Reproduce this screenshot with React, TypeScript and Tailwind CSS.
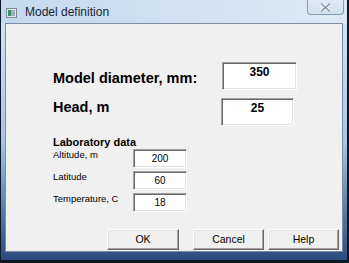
const font = { fontFamily: '"Liberation Sans", Arial, sans-serif' };

function Sunken({ value, className }: { value: string; className: string }) {
  return (
    <div
      className={`bg-white border border-t-[#a0a0a0] border-l-[#a0a0a0] border-r-white border-b-white shadow-[inset_1px_1px_0_#696969,inset_-1px_-1px_0_#e3e3e3] text-center text-black ${className}`}
    >
      {value}
    </div>
  );
}

function Btn({ label, className }: { label: string; className: string }) {
  return (
    <button
      className={`h-[21px] bg-[#f0f0f0] border border-t-white border-l-white border-r-[#696969] border-b-[#696969] shadow-[inset_-1px_-1px_0_#a0a0a0,inset_1px_1px_0_#e3e3e3] text-[10.5px] leading-none text-black ${className}`}
    >
      {label}
    </button>
  );
}

function LabRow({ label, value, className }: { label: string; value: string; className?: string }) {
  return (
    <div className={`flex items-start ${className ?? ""}`}>
      <span className="w-[80px] text-[9.5px] leading-[11px] text-black">{label}</span>
      <Sunken
        value={value}
        className="w-[54px] h-[19px] flex items-center justify-center text-[10px] leading-[12px]"
      />
    </div>
  );
}

export default function App() {
  return (
    <div className="w-[349px] h-[263px] bg-[#0e1726] pl-px pr-[2px] pb-[3px]" style={font}>
      <div className="w-full h-full flex flex-col bg-linear-to-b from-[#cfe2f4] from-10% via-[#a8c3e2] via-55% to-[#2c4a7c] to-100%">
        {/* title bar */}
        <div className="h-[23px] flex items-start bg-linear-to-r from-[#c3d9ee] to-[#dceaf7]">
          <svg width="11" height="10" viewBox="0 0 11 10" className="ml-[5px] mt-[8px]">
            <rect x="0.5" y="0.5" width="10" height="9" fill="#e4ebf1" stroke="#7d8894" />
            <rect x="2" y="2" width="3" height="6" fill="#3f8f6c" />
            <rect x="5" y="2" width="4" height="6" fill="#9fb0bf" />
          </svg>
          <span className="ml-[8px] mt-[5px] text-[12px] leading-[14px] text-[#1c2533]">
            Model definition
          </span>
          <div className="ml-auto mr-[3px] w-[37px] h-[15px] rounded-b-[4px] border border-t-0 border-[#8b9db3] bg-linear-to-b from-[#dfeaf6] to-[#cfdfef] flex items-center justify-center">
            <svg width="11" height="9" viewBox="0 0 11 9">
              <path d="M1.5 1 L9.5 8 M9.5 1 L1.5 8" stroke="#f4f7fa" strokeWidth="3.2" strokeLinecap="square" />
              <path d="M1.5 1 L9.5 8 M9.5 1 L1.5 8" stroke="#8c96a3" strokeWidth="1.6" strokeLinecap="square" />
            </svg>
          </div>
        </div>

        {/* client area */}
        <div className="ml-[4px] mr-[4px] mb-[8px] flex-1 border border-[#7a8ca3] bg-[#f0f0f0] flex flex-col">
          <div className="flex items-start mt-[38px] pl-[47px]">
            <span className="w-[169px] mt-[8px] text-[14.5px] leading-[16px] font-bold text-black">
              Model diameter, mm:
            </span>
            <Sunken value="350" className="w-[75px] h-[28px] pt-[3px] text-[12px] leading-[13px] font-bold" />
          </div>
          <div className="flex items-start mt-[8px] pl-[47px]">
            <span className="w-[168px] mt-px text-[14.5px] leading-[16px] font-bold text-black">Head, m</span>
            <Sunken value="25" className="w-[73px] h-[28px] pt-[3px] text-[12px] leading-[13px] font-bold" />
          </div>

          <div className="pl-[47px] mt-[10px] flex flex-col">
            <span className="text-[11px] leading-[13px] font-bold text-black">Laboratory data</span>
            <LabRow label="Altitude, m" value="200" />
            <LabRow label="Latitude" value="60" className="mt-[3px]" />
            <LabRow label="Temperature, C" value="18" className="mt-[3px]" />
          </div>

          <div className="flex justify-end pr-[3px] mt-[17px]">
            <Btn label="OK" className="w-[72px]" />
            <Btn label="Cancel" className="w-[71px] ml-[14px]" />
            <Btn label="Help" className="w-[71px] ml-[4px]" />
          </div>
        </div>
      </div>
    </div>
  );
}
